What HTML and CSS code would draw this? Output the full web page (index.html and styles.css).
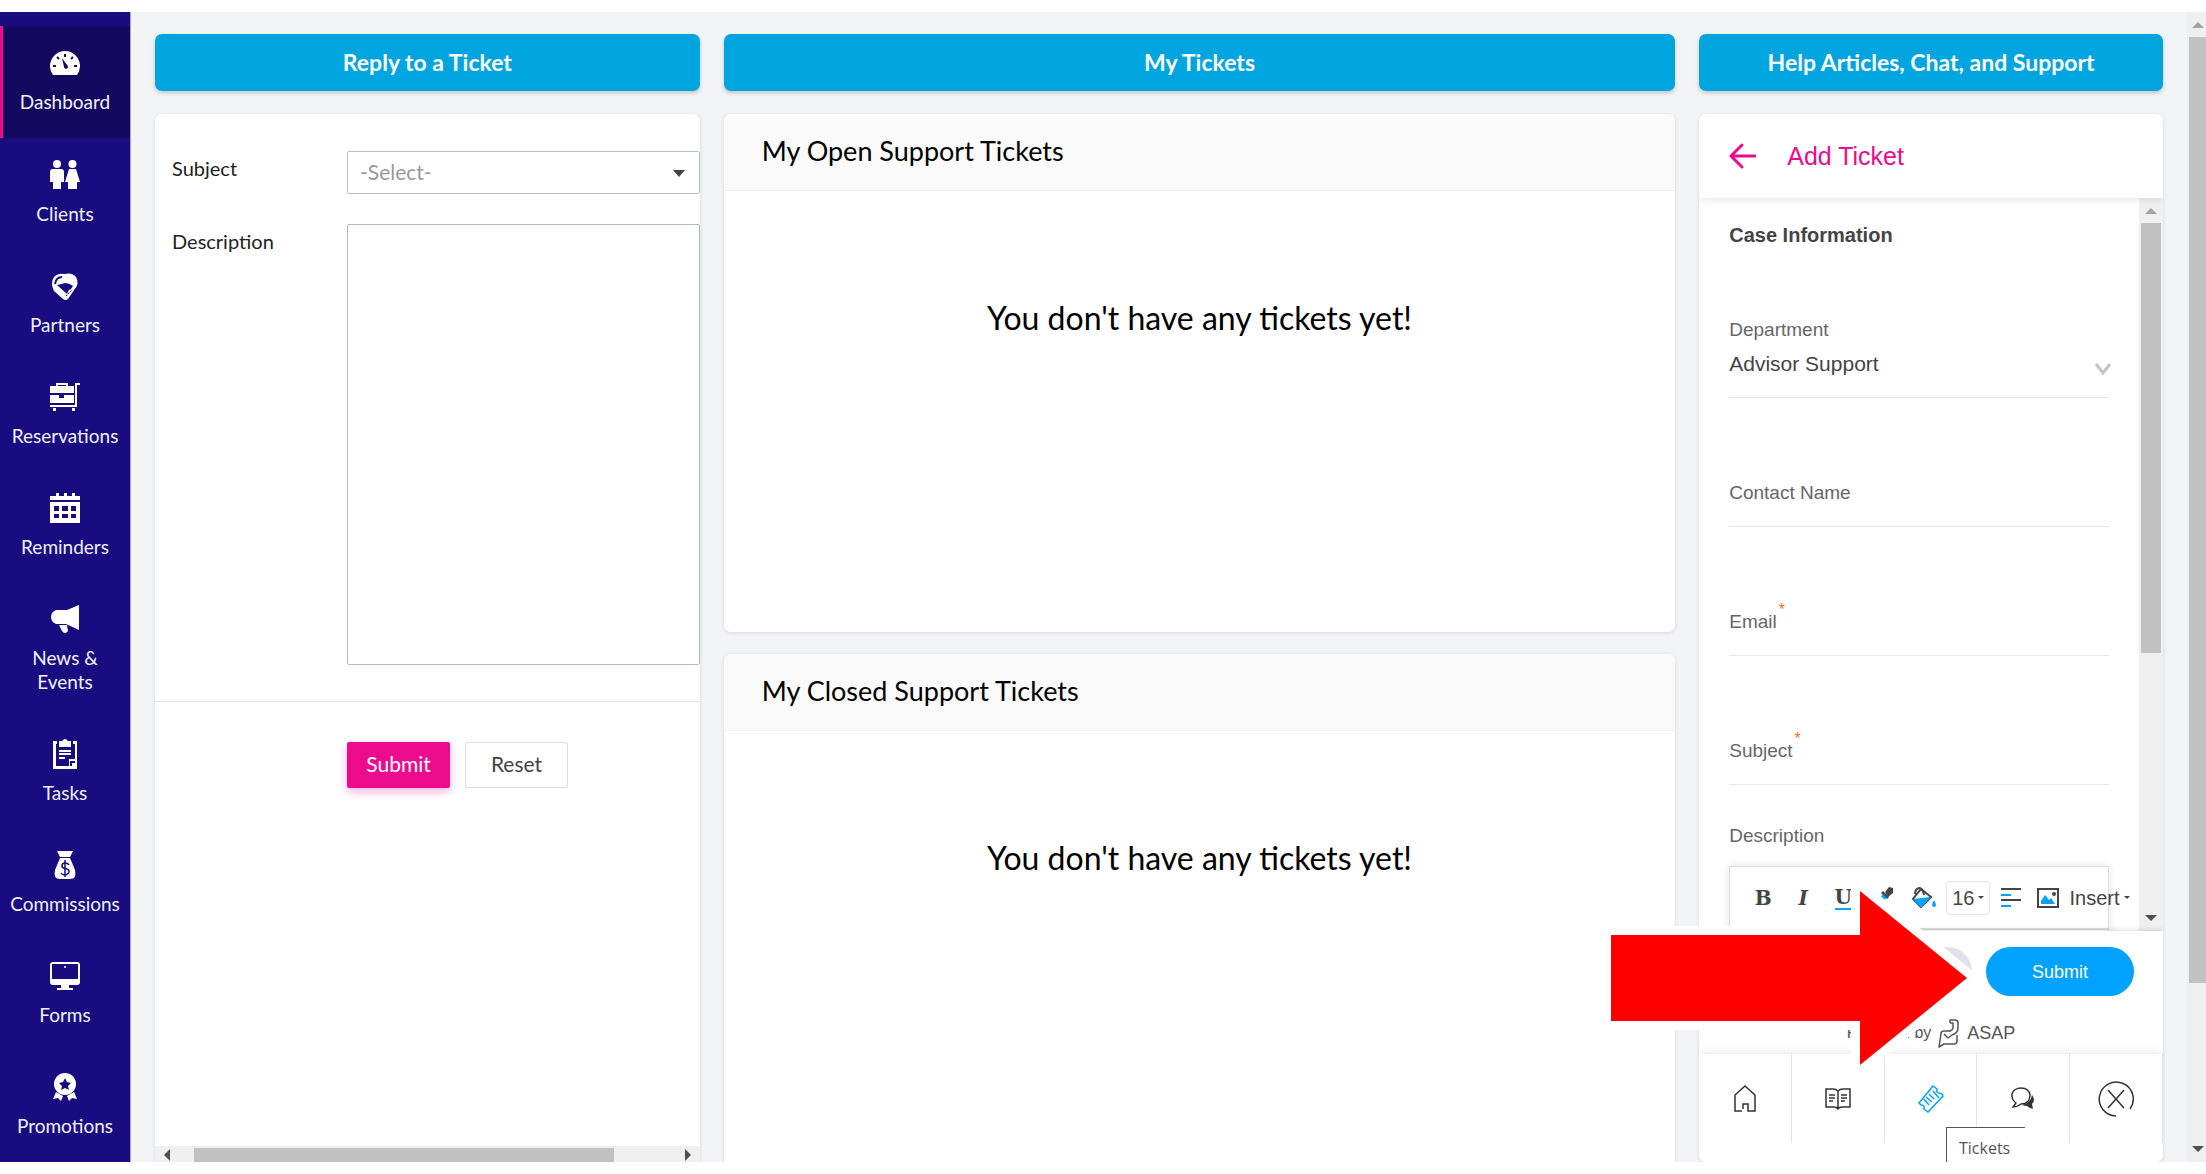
FILE: index.html
```html
<!DOCTYPE html>
<html lang="en">
<head>
  <meta charset="UTF-8" />
  <title>Support Tickets</title>
  <meta name="viewport" content="width=device-width, initial-scale=1.0" />
  <link rel="stylesheet" href="styles.css">
</head>
<body>
  <div class="app">

    <!-- Left navigation -->
    <nav class="sidebar">
      <a href="#" class="nav-item active">
        <svg viewBox="0 0 30 30"><path fill="#fff" d="M3 27A15 15 0 1 1 27 27Z"/><g stroke="#130a60" stroke-width="2"><path d="M15 6v3M7 9l2 2M23 9l-2 2M3 18h3M24 18h3"/></g><path fill="#130a60" d="M12 10l5 7a2 2 0 1 1-3 2z"/></svg>
        <span>Dashboard</span>
      </a>
      <a href="#" class="nav-item">
        <svg viewBox="0 0 30 30"><g fill="#fff"><circle cx="7" cy="4" r="4"/><circle cx="22.500" cy="4" r="4"/><path d="M3 9h8q3 0 3 3v10h-3v7H3v-7H0V12q0-3 3-3zM19 9h7l4 13h-3v7h-9v-7h-3z"/></g></svg>
        <span>Clients</span>
      </a>
      <a href="#" class="nav-item">
        <svg viewBox="0 0 30 30"><path fill="#fff" d="M15 3Q22 1 26 6q4 7-2 13l-6 9q-2 2-5 0L4 20Q0 12 4 6q4-4 11-3z"/><path fill="none" stroke="#180c80" stroke-width="2" d="M5 13q1-7 7-7"/><path fill="#180c80" d="M7 14q5-1 8-2 4 0 8 3l-2 3-2 1-2 4z"/><path d="M16 25l6-6M20 27l5-6" stroke="#180c80" stroke-width="1" stroke-dasharray="2 1"/></svg>
        <span>Partners</span>
      </a>
      <a href="#" class="nav-item">
        <svg viewBox="0 0 30 30"><g fill="#fff"><path d="M6 4V1h12v3h6v7H0V4h6zm2 0h8V3H8zM0 13h9v3h5v-3h10v8H0zM3 26h3v3H3zM22 26h3v3h-3z"/></g><path fill="none" stroke="#fff" stroke-width="2" d="M0 24h26V2h4"/></svg>
        <span>Reservations</span>
      </a>
      <a href="#" class="nav-item">
        <svg viewBox="0 0 30 30"><path fill="#fff" fill-rule="evenodd" d="M0 3h6V0h3v3h5V0h3v3h5V0h3v3h5v4H0zM0 9h30v21H0zM4 13v5h5v-5zm8 0v5h6v-5zm9 0v5h5v-5zM4 21v4h5v-4zm8 0v4h6v-4zm9 0v4h5v-4z"/></svg>
        <span>Reminders</span>
      </a>
      <a href="#" class="nav-item">
        <svg viewBox="0 0 30 30"><path fill="#fff" d="M29 1v25l-13-6H6q-5-2-5-7t5-7h11zM9 21h8l1 6q-3 4-6 0z"/></svg>
        <span>News &amp;<br>Events</span>
      </a>
      <a href="#" class="nav-item">
        <svg viewBox="0 0 30 30"><path fill="#fff" d="M9 2h3q3-4 6 0h3v6H9zM3 2h4v3H6v22h13v-7h6V5h-2V2h4v28H3zM9 11h12v2H9zM9 14h12v2H9zM9 18h6v2H9z"/><path d="M21 27v-4h4" stroke="#180c80" stroke-width="2" fill="none"/></svg>
        <span>Tasks</span>
      </a>
      <a href="#" class="nav-item">
        <svg viewBox="0 0 30 30"><path fill="#fff" d="M7 1h16l-3 6H10zM10 8h10l5 12q2 9-5 9H10q-7 0-5-9z"/><path d="M19 15q-1-2-4-2-3 0-3 3 0 2 3 2.500 4 .5 4 3T15 25q-3 0-4-2M15 10v17" fill="none" stroke="#180c80" stroke-width="1.500"/></svg>
        <span>Commissions</span>
      </a>
      <a href="#" class="nav-item">
        <svg viewBox="0 0 30 30"><path fill="#fff" fill-rule="evenodd" d="M3 1h24q3 0 3 3v17q0 3-3 3h-8v3h4v2H7v-2h4v-3H3q-3 0-3-3V4q0-3 3-3zM2 3v15h26V3z"/><circle cx="15" cy="6" r="1" fill="#fff"/></svg>
        <span>Forms</span>
      </a>
      <a href="#" class="nav-item">
        <svg viewBox="0 0 30 30"><g fill="#fff"><circle cx="15" cy="12" r="11"/><path d="M6 20l7 4-2 5-3-3-5 1zM24 20l-7 4 2 5 3-3 5 1z"/></g><path fill="#180c80" d="M15 6l2 4 4 1-3 3 1 4-4-2-4 2 1-4-3-3 4-1z"/></svg>
        <span>Promotions</span>
      </a>
    </nav>

    <main class="board">

      <!-- Reply column -->
      <section class="column">
        <h2 class="column-title">Reply to a Ticket</h2>
        <div class="card reply-card">
          <form>
            <div class="reply-fields">
              <label for="replySubject">Subject</label>
              <div class="select-wrap">
                <select id="replySubject" class="reply-select">
                  <option>-Select-</option>
                </select>
                <span class="caret"></span>
              </div>
              <label for="replyText">Description</label>
              <textarea id="replyText"></textarea>
            </div>
            <div class="reply-buttons">
              <button type="submit" class="btn btn-pink">Submit</button>
              <button type="reset" class="btn">Reset</button>
            </div>
          </form>
          <div class="hscroll" aria-hidden="true">
            <i class="tri tri-left"></i>
            <div class="hscroll-track"><div class="hscroll-thumb"></div></div>
            <i class="tri tri-right"></i>
          </div>
        </div>
      </section>

      <!-- Tickets column -->
      <section class="column">
        <h2 class="column-title">My Tickets</h2>
        <div class="ticket-list">
          <div class="card ticket-card">
            <h3>My Open Support Tickets</h3>
            <p>You don't have any tickets yet!</p>
          </div>
          <div class="card ticket-card">
            <h3>My Closed Support Tickets</h3>
            <p>You don't have any tickets yet!</p>
          </div>
        </div>
      </section>

      <!-- Help widget column -->
      <section class="column">
        <h2 class="column-title">Help Articles, Chat, and Support</h2>
        <div class="card widget">
          <header class="widget-header">
            <button class="back" aria-label="Back">
              <svg width="27" height="26" viewBox="0 0 27 26"><path d="M13 2L2 13l11 11M2 13h24" fill="none" stroke="#ec0b8c" stroke-width="3" stroke-linecap="round" stroke-linejoin="round"/></svg>
            </button>
            <span>Add Ticket</span>
          </header>

          <div class="widget-body">
            <form class="ticket-form">
              <h4>Case Information</h4>
              <div class="field field-select">
                <label for="department">Department</label>
                <select id="department">
                  <option>Advisor Support</option>
                </select>
                <svg class="chevron" width="16" height="12" viewBox="0 0 16 12"><path d="M1 1l7 9 7-9" fill="none" stroke="#c4c4c4" stroke-width="3"/></svg>
              </div>
              <div class="field">
                <label for="contact">Contact Name</label>
                <input id="contact" type="text">
              </div>
              <div class="field">
                <label for="email">Email<sup>*</sup></label>
                <input id="email" type="email">
              </div>
              <div class="field">
                <label for="subject">Subject<sup>*</sup></label>
                <input id="subject" type="text">
              </div>
              <div class="description-label">Description</div>
              <div class="editor">
                <div class="toolbar">
                  <button type="button" class="serif">B</button>
                  <button type="button" class="serif italic">I</button>
                  <button type="button" class="serif underline">U</button>
                  <button type="button" aria-label="Text colour">
                    <svg width="24" height="24" viewBox="0 0 24 24"><path fill="#444" d="M14 6l4-5 4 1v5l-5 4z"/><path fill="#444" d="M12 5l6 6-2 2-6-6z"/><path fill="#00a2ff" d="M12 8l4 4-6 5H7v-3z"/></svg>
                  </button>
                  <button type="button" aria-label="Fill colour">
                    <svg width="26" height="24" viewBox="0 0 26 24"><path d="M10 3l10 8-10 10-8-8z" fill="#fff" stroke="#444" stroke-width="2"/><path fill="#00a2ff" d="M2 13l18-2-10 11zM23 14q4 7 0 7t0-7z"/><path d="M4 8q0-5 4-6 4 0 5 7" fill="none" stroke="#444" stroke-width="2"/></svg>
                  </button>
                  <button type="button" class="size">16<i class="dot-caret"></i></button>
                  <button type="button" aria-label="Align">
                    <svg width="20" height="20" viewBox="0 0 20 20"><path stroke="#444" stroke-width="2" d="M0 1h20M0 12h20"/><path stroke="#00a2ff" stroke-width="2" d="M0 7h10M0 18h10"/></svg>
                  </button>
                  <button type="button" class="insert"><svg width="22" height="20" viewBox="0 0 22 20"><path fill="#fff" stroke="#444" stroke-width="2" d="M1 1h20v18H1z"/><path fill="#00a2ff" d="M4 16V13l4-6 4 5 2-2 4 6z"/><circle cx="17" cy="6" r="2" fill="#444"/></svg>Insert<i class="dot-caret"></i></button>
                </div>
              </div>
            </form>
            <div class="vscroll" aria-hidden="true">
              <i class="tri tri-up"></i>
              <div class="vscroll-track"><div class="vscroll-thumb form-thumb"></div></div>
              <i class="tri tri-down"></i>
            </div>
          </div>

          <div class="widget-footer">
            <div class="widget-actions">
              <button class="pill pill-grey" type="button">Cancel</button>
              <button class="pill pill-blue" type="button">Submit</button>
            </div>
            <div class="powered">
              <span>Powered by</span>
              <svg width="22" height="30" viewBox="0 0 22 30"><path d="M12 5V2h5q3 0 3 3v5q0 5-6 7l-4 3-4-4M13 13H6q-3 0-3 3L1 29l5-3h10q3 0 3-3v-6M12 5h3v4q0 4-5 4" fill="none" stroke="#555" stroke-width="1.500" stroke-linejoin="round"/></svg>
              <span class="asap">ASAP</span>
            </div>
          </div>

          <nav class="widget-nav">
            <a href="#" aria-label="Home"><svg width="22" height="27" viewBox="0 0 22 27"><path d="M8 26H1V10l10-9 10 9v16h-7v-7H9v5" fill="none" stroke="#333" stroke-width="1.500"/></svg></a>
            <a href="#" aria-label="Articles"><svg width="26" height="22" viewBox="0 0 26 22"><path d="M13 3q-2-2-5-2H1v18h8q3 0 4 2 1-2 4-2h8V1h-7q-3 0-5 2zv17M4 7h6M4 10h6M4 13h4M16 7h6M16 10h6M16 13h4" fill="none" stroke="#333" stroke-width="1.500"/></svg></a>
            <a href="#" aria-label="Tickets"><svg width="26" height="28" viewBox="0 0 26 28"><path d="M15 1l4 3q-1 4 2 4l3 1 1 2-15 16-4-3q1-4-3-4l-2-2zM15 6l6 7M6 14l5 6M8 12l6 5M11 9l5 5" fill="none" stroke="#00a2ff" stroke-width="1.500"/></svg></a>
            <a href="#" aria-label="Chat"><svg width="26" height="26" viewBox="0 0 26 26"><path d="M3 21l3-4Q1 13 2 8q2-6 9-6 8 0 9 7 0 9-9 9-4 3-8 3z" fill="none" stroke="#333" stroke-width="1.500"/><path fill="#333" d="M22 9q4 5 0 9l1 5q-4-1-6-3-3 0-5-1 9-2 10-10z"/></svg></a>
            <a href="#" aria-label="Close"><svg width="36" height="36" viewBox="0 0 36 36"><path d="M18 35A17 17 0 1 1 32 28M10 9l16 18M26 9L10 27" fill="none" stroke="#333" stroke-width="1.500"/></svg></a>
            <div class="tooltip">Tickets</div>
          </nav>
        </div>
      </section>

    </main>

    <!-- Page scrollbar -->
    <div class="vscroll page-scroll" aria-hidden="true">
      <i class="tri tri-up"></i>
      <div class="vscroll-track"><div class="vscroll-thumb page-thumb"></div></div>
      <i class="tri tri-down"></i>
    </div>

    <!-- Arrow pointing at the submit button -->
    <svg class="pointer" width="376" height="194" viewBox="0 0 376 194"><path d="M10 54h249V10l107 87-107 87v-44H10z" fill="#f00" stroke="#fff" stroke-width="18" paint-order="stroke"/></svg>
  </div>
</body>
</html>
```

FILE: styles.css
```css
/* Reset */
* {
  box-sizing: border-box;
  margin: 0;
  padding: 0;
}
body {
  font-family: Lato, sans-serif;
  font-size: 20px;
  line-height: 24px;
  color: #222;
  background: #fff;
}
button, input, select, textarea {
  font: inherit;
  color: inherit;
  border: none;
  background: none;
}
a {
  text-decoration: none;
}

.app {
  position: relative;
  display: flex;
  height: calc(100vh - 24px);
  margin: 12px 0;
  overflow: hidden;
  background: #f2f4f6;
}

/* Left navigation */
.sidebar {
  flex: 0 0 131px;
  padding-top: 14px;
  background: #180c80;
  border-right: 1px solid #a5a3cc;
}
.nav-item {
  display: flex;
  flex-direction: column;
  align-items: center;
  gap: 12px;
  min-height: 111px;
  padding: 22px 0 23px;
  color: #f1f1fa;
  text-align: center;
  font-size: 19px;
}
.nav-item svg {
  width: 30px;
  height: 30px;
}
.nav-item.active {
  min-height: 112px;
  background: #130a60;
  box-shadow: inset 3px 0 #ec0b8c;
}

/* Three columns */
.board {
  flex: 1;
  display: grid;
  grid-template-columns: 545fr 952fr 464fr;
  gap: 24px;
  padding: 22px 24px 0;
  min-width: 0;
}
.column {
  display: flex;
  flex-direction: column;
  gap: 23px;
  min-width: 0;
  min-height: 0;
}
.column-title {
  padding: 16px 0 17px;
  border-radius: 7px;
  background: #00a5df;
  box-shadow: 0 2px 4px rgba(0,0,0,0.2);
  color: #fff;
  font-size: 23px;
  font-weight: 700;
  text-align: center;
}
.card {
  background: #fff;
  border-radius: 7px;
  box-shadow: 0 1px 4px rgba(0,0,0,0.12);
}

/* Reply form */
.reply-card {
  flex: 1;
  display: flex;
  flex-direction: column;
  justify-content: space-between;
  border-radius: 7px 7px 0 0;
  overflow: hidden;
}
.reply-fields {
  display: grid;
  grid-template-columns: 175px 1fr;
  row-gap: 30px;
  padding: 37px 0 36px 17px;
  border-bottom: 1px solid #e3e5e7;
}
.reply-fields label {
  padding-top: 5px;
}
.select-wrap {
  position: relative;
}
.reply-select {
  width: 100%;
  height: 43px;
  padding: 0 12px 2px;
  border: 1px solid #b5c0ca;
  border-radius: 2px;
  appearance: none;
  color: #999;
  font-size: 21px;
}
.caret {
  position: absolute;
  right: 15px;
  top: 19px;
  border: 6px solid transparent;
  border-top: 7px solid #444;
  border-bottom: 0;
}
textarea {
  height: 441px;
  border: 1px solid #aebac5;
  border-radius: 2px;
  resize: none;
}
.reply-buttons {
  display: flex;
  gap: 15px;
  padding: 40px 0 0 192px;
}
.btn {
  width: 103px;
  height: 46px;
  padding-bottom: 3px;
  border: 1px solid #ddd;
  border-radius: 2px;
  color: #444;
  font-size: 21px;
}
.btn-pink {
  border-color: #ec0b8c;
  background: #ec0b8c;
  box-shadow: 0 4px 10px rgba(236,11,140,0.3);
  color: #fff;
}

/* Ticket lists */
.ticket-list {
  display: flex;
  flex-direction: column;
  gap: 22px;
  min-height: 0;
}
.ticket-card {
  flex: 0 0 518px;
  overflow: hidden;
}
.ticket-card h3 {
  padding: 25px 38px 27px;
  border-bottom: 1px solid #eef2f5;
  background: #fafafa;
  color: #000;
  font-size: 27px;
  font-weight: 400;
}
.ticket-card p {
  padding-top: 107px;
  color: #000;
  font-size: 32px;
  line-height: 40px;
  text-align: center;
}

/* Help widget */
.widget {
  flex: 1;
  display: flex;
  flex-direction: column;
  min-height: 0;
  overflow: hidden;
  font-family: "Liberation Sans", sans-serif;
  font-size: 19px;
  color: #666;
}
.widget-header {
  position: relative;
  display: flex;
  align-items: center;
  gap: 31px;
  flex: 0 0 84px;
  padding-left: 30px;
  box-shadow: 0 1px 8px rgba(0,0,0,0.12);
  color: #ec0b8c;
  font-size: 25px;
}
.back {
  display: flex;
}
.widget-body {
  flex: 1;
  display: flex;
  min-height: 0;
  overflow: hidden;
}
.ticket-form {
  flex: 1;
  min-width: 0;
  padding: 25px 30px 0;
}
.ticket-form h4 {
  color: #444;
  font-size: 20px;
}
.field {
  position: relative;
  display: flex;
  flex-direction: column;
  padding-top: 83px;
}
.field input {
  height: 22px;
  border-bottom: 1px solid #e6e6e6;
}
.field sup {
  position: absolute;
  margin: -12px 0 0 2px;
  color: #f07030;
}
.field-select {
  padding-top: 71px;
}
.field-select select {
  height: 56px;
  padding-bottom: 11px;
  border-bottom: 1px solid #e6e6e6;
  appearance: none;
  color: #444;
  font-size: 21px;
}
.chevron {
  position: absolute;
  right: -2px;
  bottom: 23px;
}
.description-label {
  padding: 39px 0 18px;
}
.editor {
  height: 300px;
  border: 1px solid #ddd;
  box-shadow: 0 0 10px rgba(0,0,0,0.1);
}
.toolbar {
  display: flex;
  align-items: center;
  height: 63px;
  padding-left: 21px;
  border-bottom: 2px solid #ddd;
  color: #444;
  font-size: 20px;
}
.toolbar button {
  display: flex;
  align-items: center;
  flex-shrink: 0;
  margin-right: 16px;
}
.toolbar .serif {
  justify-content: center;
  width: 24px;
  font-family: "DejaVu Serif", serif;
  font-weight: 700;
}
.toolbar .italic {
  font-style: italic;
}
.toolbar .underline {
  width: 16px;
  height: 24px;
  margin: 0 20px 0 4px;
  border-bottom: 2px solid #00a2ff;
}
.toolbar .size {
  height: 34px;
  padding: 0 5px;
  margin: 0 11px 0 -7px;
  border: 1px solid #e6e6e6;
  border-radius: 4px;
}
.toolbar .insert {
  gap: 10px;
}
.dot-caret {
  margin-left: 4px;
  border: 3px solid transparent;
  border-top-color: #444;
  border-bottom: 0;
}
.toolbar .insert .dot-caret {
  margin-left: -6px;
}

/* Widget footer */
.widget-footer {
  position: relative;
  padding: 16px 29px 0;
  background: #fff;
  box-shadow: 0 -1px 5px rgba(0,0,0,0.15);
}
.widget-actions {
  display: flex;
  justify-content: flex-end;
  gap: 14px;
}
.pill {
  width: 148px;
  height: 49px;
  border-radius: 25px;
  font-size: 18px;
}
.pill-grey {
  background: #dfe2ea;
}
.pill-blue {
  background: #00a2ff;
  color: #fff;
}
.powered {
  display: flex;
  align-items: center;
  justify-content: center;
  gap: 7px;
  height: 34px;
  margin: 20px 0 4px;
  color: #555;
  font-size: 16px;
}
.asap {
  font-size: 18px;
}
.widget-nav {
  position: relative;
  display: flex;
  flex: 0 0 108px;
  background: #fff;
  box-shadow: 0 -1px 8px rgba(0,0,0,0.1);
}
.widget-nav a {
  flex: 1;
  display: flex;
  align-items: center;
  justify-content: center;
  height: 89px;
  border-right: 1px solid #e3e3e3;
}
.tooltip {
  position: absolute;
  right: 138px;
  bottom: 0;
  width: 79px;
  height: 35px;
  padding: 8px 12px;
  border: solid #555;
  border-width: 1px 0 0 1px;
  background: #fff;
  color: #555;
  font-family: "Open Sans", sans-serif;
  font-size: 16px;
}

/* Scrollbars */
.vscroll {
  flex: 0 0 24px;
  display: flex;
  flex-direction: column;
  align-items: center;
  padding: 10px 2px;
  background: #f0f0f0;
}
.vscroll-track {
  flex: 1;
  width: 100%;
  margin: 9px 0;
}
.vscroll-thumb {
  background: #c1c1c1;
}
.form-thumb {
  height: 63%;
}
.page-scroll {
  flex-basis: 19px;
  padding-right: 0;
}
.page-thumb {
  height: 86%;
}
.tri {
  border: 6px solid transparent;
}
.tri-up {
  border-top: 0;
  border-bottom-color: #a3a3a3;
}
.tri-down {
  border-bottom: 0;
  border-top-color: #505050;
}
.tri-left {
  border-left: 0;
  border-right-color: #505050;
}
.tri-right {
  border-right: 0;
  border-left-color: #505050;
}
.hscroll {
  display: flex;
  align-items: center;
  height: 16px;
  padding: 2px 9px 0;
  background: #f0f0f0;
}
.hscroll-track {
  flex: 1;
  height: 100%;
  margin: 0 24px;
}
.hscroll-thumb {
  width: 90%;
  height: 100%;
  background: #c1c1c1;
}

.pointer {
  position: absolute;
  right: 229px;
  bottom: 87px;
  pointer-events: none;
}
```
